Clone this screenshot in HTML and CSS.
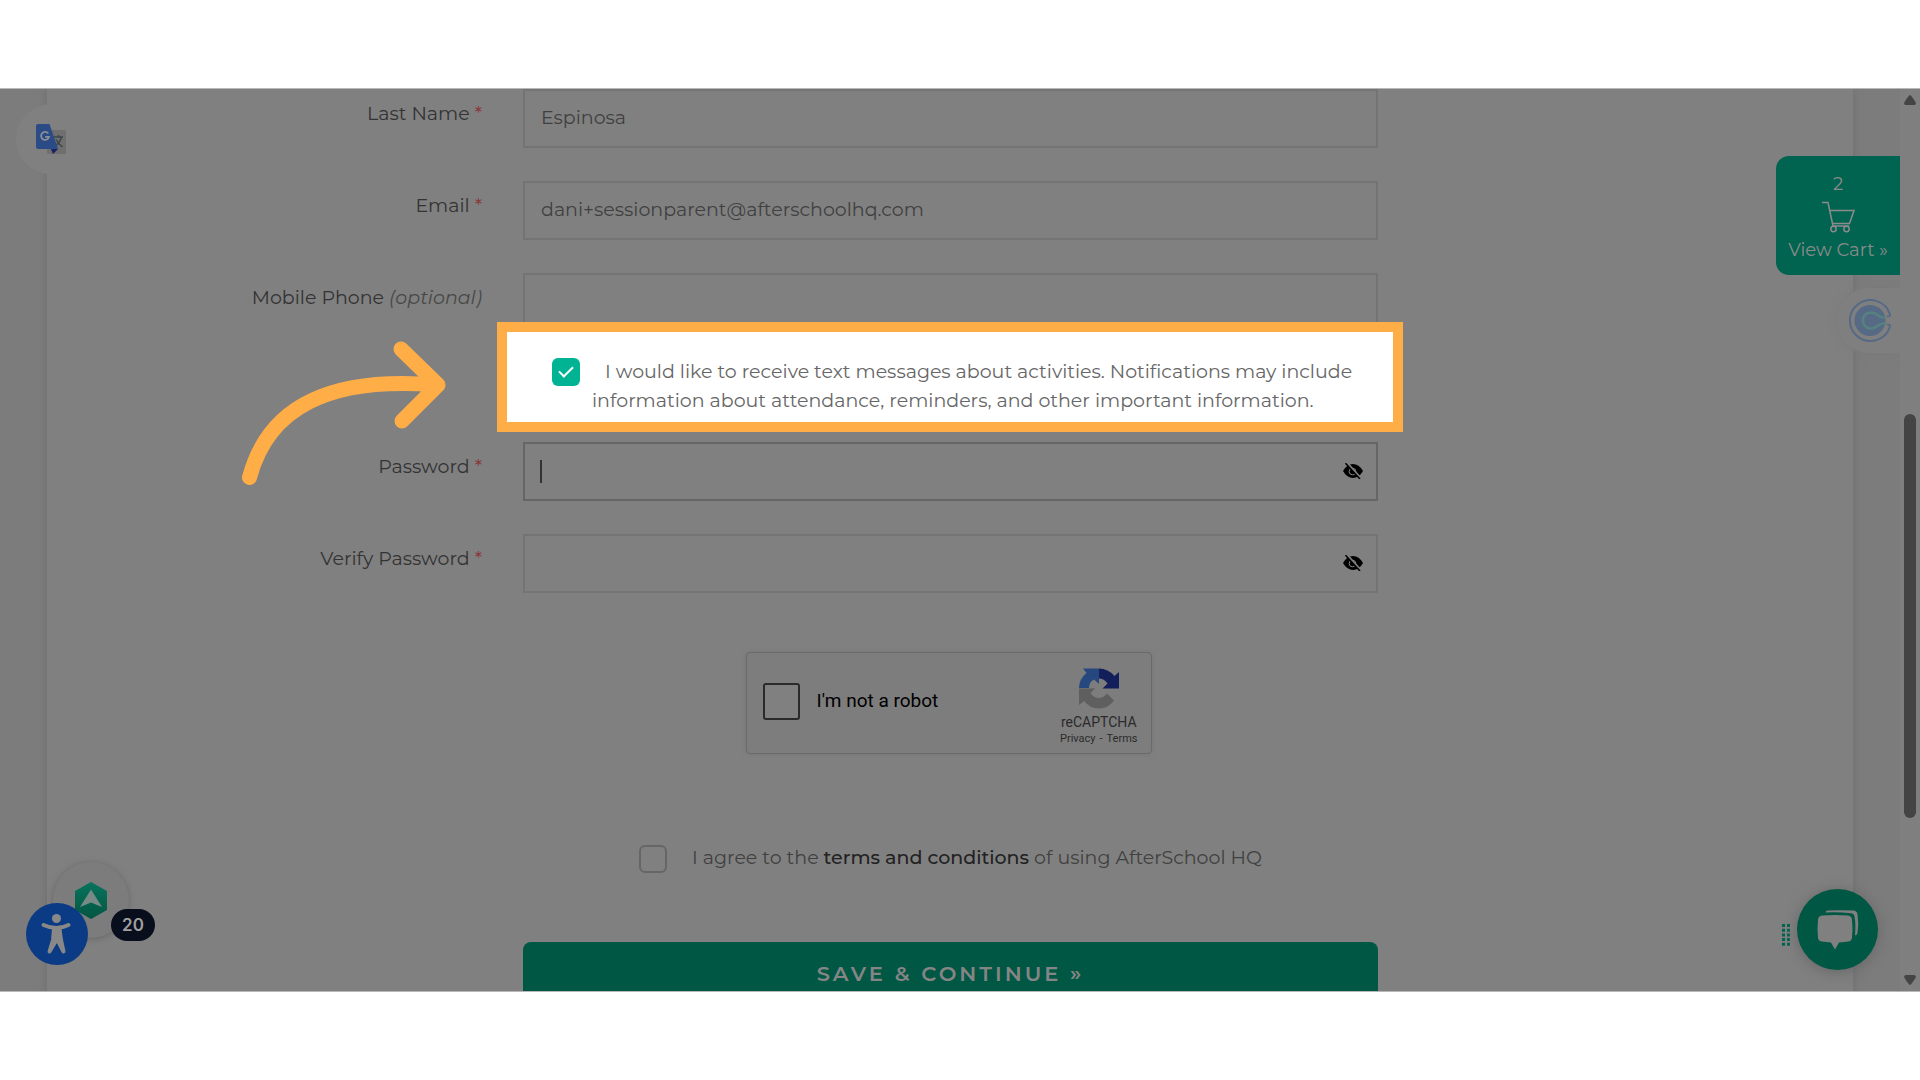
FILE: index.html
```html
<!DOCTYPE html>
<html lang="en">
<head>
<meta charset="utf-8">
<title>Create account</title>
<link rel="stylesheet" href="styles.css">
</head>
<body>
<main class="stage">
  <div class="page">
    <form class="panel">
      <div class="row">
        <label for="last">Last Name <span class="req">*</span></label>
        <div class="field"><input class="text-input" id="last" type="text" value="Espinosa"></div>
      </div>
      <div class="row">
        <label for="email">Email <span class="req">*</span></label>
        <div class="field"><input class="text-input" id="email" type="email" value="dani+sessionparent@afterschoolhq.com"></div>
      </div>
      <div class="row">
        <label for="phone">Mobile Phone <em>(optional)</em></label>
        <div class="field"><input class="text-input" id="phone" type="tel"></div>
      </div>
      <div class="row consent-row">
        <div class="consent">
          <input class="tick" type="checkbox" id="sms" checked>
          <label for="sms">I would like to receive text messages about activities. Notifications may include<br>information about attendance, reminders, and other important information.</label>
        </div>
      </div>
      <div class="row">
        <label for="pass">Password <span class="req">*</span></label>
        <div class="field">
          <input class="text-input active" id="pass" type="password">
          <span class="caret"></span>
          <button class="eye" type="button" aria-label="Show password"><svg viewBox="0 0 20 16"><path d="M0 8Q4 1 10 1T20 8Q16 15 10 15T0 8Z"/><circle cx="9.500" cy="8.500" r="3.300" fill="none" stroke="#808080" stroke-width="1"/><path d="M4 0 18 15.500" stroke="#808080" stroke-width="2.400"/><path d="M2.500 .2 17 16" stroke="#000" stroke-width="1.500"/></svg></button>
        </div>
      </div>
      <div class="row">
        <label for="verify">Verify Password <span class="req">*</span></label>
        <div class="field">
          <input class="text-input" id="verify" type="password">
          <button class="eye" type="button" aria-label="Show password"><svg viewBox="0 0 20 16"><path d="M0 8Q4 1 10 1T20 8Q16 15 10 15T0 8Z"/><circle cx="9.500" cy="8.500" r="3.300" fill="none" stroke="#808080" stroke-width="1"/><path d="M4 0 18 15.500" stroke="#808080" stroke-width="2.400"/><path d="M2.500 .2 17 16" stroke="#000" stroke-width="1.500"/></svg></button>
        </div>
      </div>
      <div class="row wide captcha-row">
        <div class="captcha">
          <input class="robot" type="checkbox" id="robot">
          <label for="robot">I'm not a robot</label>
          <div class="brand">
            <svg viewBox="0 0 40 41" width="40" height="41">
              <path fill="#27477f" d="M0 20A20 20 0 0 1 7.500 5L4 .5H20V16L15 11.500Q10 14 10 20Z"/>
              <path fill="#121f5a" d="M20 .5Q29 .5 35.500 8L40 4V20.500H23.500L28.500 15.500Q25 10.500 20 10.500Z"/>
              <path fill="#5f5f5f" d="M0 20.500H16L11.500 25Q14.500 30 20 30 24 30 28 25.500L35 32.500Q29 40.500 20 40.500 11 40.500 5 33L0 37Z"/>
            </svg>
            <span class="brand-name">reCAPTCHA</span>
            <span class="brand-links"><a href="#">Privacy</a><span>-</span><a href="#">Terms</a></span>
          </div>
        </div>
      </div>
      <div class="row wide agree-row">
        <div class="agree">
          <input class="tick" type="checkbox" id="agree">
          <label for="agree">I agree to the <a href="#">terms and conditions</a> of using AfterSchool HQ</label>
        </div>
      </div>
      <div class="row wide save-row">
        <button class="save" type="submit">SAVE &amp; CONTINUE »</button>
      </div>
    </form>

    <button class="translate" type="button" aria-label="Translate">
      <svg viewBox="0 0 30 31" width="30" height="31">
        <rect x="11" y="6" width="19" height="24" rx="1.500" fill="#6f6f6f"/>
        <path d="M18 13H27M22.500 11V13M25.500 13Q24 19 18.500 22.500M20 15.500Q22 19.500 26.500 23" fill="none" stroke="#3b474b" stroke-width="1.500"/>
        <path d="M15 25H22L17 30Z" fill="#1a2260"/>
        <path d="M2 0H13.500L22 25H2Q0 25 0 23V2Q0 0 2 0Z" fill="#2b4b86"/>
        <path d="M12.300 9.500A4 4 0 1 0 13 12.800H9.200" fill="none" stroke="#8c9097" stroke-width="1.700"/>
      </svg>
    </button>

    <a class="cart" href="#">
      <span>2</span>
      <svg viewBox="0 0 33 32" width="33" height="32" fill="none" stroke="#8b8b8b" stroke-width="1.500">
        <path d="M0 1.500H6L11 25H27M8 9.500H32L27.500 22.500H11"/><circle cx="11.500" cy="28" r="2.700"/><circle cx="24.500" cy="28" r="2.700"/>
      </svg>
      <span>View Cart »</span>
    </a>

    <a class="calendly" href="#" aria-label="Schedule">
      <svg viewBox="0 0 43 43" width="43" height="43" fill="none">
        <circle cx="21" cy="21.500" r="15.500" fill="#566a86"/>
        <path d="M37 17 44 15V28L37 26Z" fill="#7f7f7f"/>
        <path d="M41 15.500A20.500 20.500 0 1 0 41 27.500Q42 25.500 38 25.500M41 15.500Q42 17.500 38 17.500" stroke="#566a86" stroke-width="2"/>
        <path d="M37 18.500H34Q31 18.500 28.500 16 26 13.500 22 13.500 14 14 14 21.500T22 29.500Q26 29.500 28.500 27 31 24.500 34 24.500H37" stroke="#56817f" stroke-width="2.600"/>
      </svg>
    </a>

    <div class="assistant">
      <svg viewBox="0 0 32 37" width="32" height="37">
        <defs><linearGradient id="hexa" x2="0" y2="1"><stop stop-color="#08735c"/><stop offset="1" stop-color="#035642"/></linearGradient></defs>
        <path d="M16 1 31 9.500V27.500L16 36 1 27.500V9.500Z" fill="url(#hexa)" stroke="url(#hexa)" stroke-width="2" stroke-linejoin="round"/>
        <path d="M16 7.500 27 25 16 20.500 5 25Z" fill="#788a85"/>
      </svg>
    </div>
    <button class="access" type="button" aria-label="Accessibility">
      <svg viewBox="0 0 62 62" width="62" height="62" fill="none" stroke="#888" stroke-linecap="round" stroke-linejoin="round">
        <circle cx="30.500" cy="15.500" r="4.500" fill="#888" stroke="none"/>
        <path d="M17.500 22Q30.500 28 42.500 22" stroke-width="4"/>
        <path d="M28 26H33.500L35 37 37.500 48.500 31 36 23.500 48.500 27 37Z" stroke-width="4" fill="#888"/>
        <path d="M27 51 31 41 34.500 51Z" fill="#0a3b84" stroke="none"/>
      </svg>
    </button>
    <span class="count">20</span>

    <svg class="grip" viewBox="0 0 8 22" width="8" height="22"><path d="M1.500 0V22M6.500 0V22" stroke="#006450" stroke-width="3" stroke-dasharray="3 1.700"/></svg>
    <button class="chat" type="button" aria-label="Open chat">
      <svg viewBox="0 0 42 40" width="42" height="40" fill="#808080">
        <path d="M5 5.500Q18 4.500 31 5.500 34.500 6 35 9.500 36 19 35 28 34.500 31 31.500 31.500L22 32.500 18 39.500 14 32.500 4.500 31.500Q1.500 31 1 28 0 19 1 9.500 1.500 6 5 5.500Z"/>
        <path d="M8.500 2.500Q8.500 .8 11 .6 24 0 37 .6 40 1 40.500 4.500 42 14 40.500 23 40 25 38 25.500 39 14 37.500 6.500 37 3.500 34 3.200 22 2 8.500 2.500Z"/>
      </svg>
    </button>

    <svg class="arrow" viewBox="0 0 206 146" width="206" height="146" fill="none" stroke="#ffad47" stroke-width="15" stroke-linecap="round" stroke-linejoin="round">
      <path d="M9.500 136.500C28 67 88 35 196 44M161 8 198 44 162 80"/>
    </svg>
  </div>
  <div class="scroll">
    <svg viewBox="0 0 12 10" width="12" height="10"><path d="M6 0Q7 0 11.500 7 12.500 10 10 10H2Q-.5 10 .5 7 5 0 6 0Z"/></svg>
    <div class="track"><div class="thumb"></div></div>
    <svg viewBox="0 0 12 10" width="12" height="10"><path d="M6 10Q7 10 11.500 3 12.500 0 10 0H2Q-.5 0 .5 3 5 10 6 10Z"/></svg>
  </div>
</main>
</body>
</html>
```
FILE: styles.css
```css
* { box-sizing: border-box; }

body {
  margin: 0;
  height: 100vh;
  padding: 88px 0;
  background: #fff;
  color: #333;
  font: 19px/28px Montserrat, Inter, sans-serif;
}

a { color: inherit; text-decoration: none; }
button { padding: 0; border: 0; font: inherit; color: inherit; }
input { margin: 0; font: inherit; }
svg { display: block; }

.stage {
  display: flex;
  height: 100%;
  overflow: hidden;
  background: #7c7c7c;
  border: solid #b8b8b8;
  border-width: 1px 0;
}

.page { position: relative; flex: 1; overflow: hidden; }

.panel {
  min-height: 100%;
  margin: 0 47px;
  background: #808080;
  box-shadow: 0 0 8px #6e6e6e;
}

.row {
  display: grid;
  grid-template-columns: 436fr 855fr 435fr;
  column-gap: 40px;
  margin-bottom: 33px;
}
.row > label { padding: 11px 1px 0 0; text-align: right; }
.row em { color: #484848; }
.req { color: #833; }

.field { position: relative; display: flex; }
.text-input {
  width: 100%;
  height: 59px;
  padding: 0 16px 2px;
  border: 2px solid #747474;
  background: none;
  color: #404040;
  outline: none;
}
.text-input.active { border-color: #666; }
.caret {
  position: absolute;
  left: 17px;
  top: 18px;
  width: 2px;
  height: 23px;
  background: #333;
}
.eye {
  position: absolute;
  right: 15px;
  top: 21px;
  width: 20px;
  height: 16px;
  background: none;
}

.consent-row { margin: -43px 0 10px; }
.consent {
  position: relative;
  grid-column: 2;
  display: flex;
  gap: 12px;
  margin: 0 -25px 0 -26px;
  padding: 25px 20px 15px 45px;
  height: 110px;
  border: 10px solid #ffad47;
  background: #fff;
  color: #666;
}
.consent label { line-height: 29px; text-indent: 13px; white-space: nowrap; }

.tick {
  flex: none;
  display: grid;
  place-items: center;
  width: 28px;
  height: 28px;
  border: 2px solid #666;
  border-radius: 6px;
  appearance: none;
}
.tick:checked { margin-top: 1px; border: 0; background: #00b393; }
.tick:checked::before {
  content: "";
  width: 6px;
  height: 12px;
  margin-bottom: 4px;
  border: solid #fff;
  border-width: 0 2px 2px 0;
  transform: rotate(45deg);
}

.wide > * { grid-column: 2; justify-self: center; }

.captcha-row { margin: 59px 0 90px; }
.captcha {
  display: flex;
  align-items: center;
  width: 406px;
  height: 102px;
  margin-right: 4px;
  padding: 0 13px 4px 16px;
  border: 1px solid #6a6a6a;
  border-radius: 4px;
  background: #7d7d7d;
  box-shadow: 0 0 5px #747474;
  color: #000;
  font-family: Roboto, sans-serif;
}
.robot {
  width: 37px;
  height: 37px;
  margin-right: 17px;
  border: 2px solid #2a2a2a;
  border-radius: 3px;
  background: #808080;
  appearance: none;
}
.brand {
  display: flex;
  flex-direction: column;
  align-items: center;
  margin-left: auto;
  padding-top: 12px;
  color: #2b2b2b;
}
.brand-name { padding-top: 3px; font-size: 14px; line-height: 20px; }
.brand-links { display: flex; gap: 4px; font-size: 11px; line-height: 14px; }

.agree-row { margin: 0 0 69px; }
.agree { display: flex; gap: 25px; color: #404040; }
.agree .tick { margin-top: 1px; }
.agree a { color: #222; font-weight: 500; }

.save-row { margin: 0; }
.save {
  width: 100%;
  height: 64px;
  border-radius: 8px;
  background: #005744;
  color: #858585;
  font-size: 21px;
  font-weight: 600;
  letter-spacing: 3px;
}

.translate {
  position: absolute;
  left: 16px;
  top: 15px;
  display: grid;
  place-items: center;
  width: 70px;
  height: 70px;
  border-radius: 50%;
  background: #808080;
}

.cart {
  position: absolute;
  right: 0;
  top: 67px;
  display: flex;
  flex-direction: column;
  align-items: center;
  gap: 3px;
  width: 124px;
  height: 119px;
  padding-top: 14px;
  border-radius: 13px 0 0 13px;
  background: #006450;
  color: #8b8b8b;
  font-size: 18px;
}

.calendly {
  position: absolute;
  right: 0;
  top: 199px;
  width: 63px;
  height: 65px;
  padding: 11px 0 0 12px;
  border-radius: 32px 0 0 32px;
  background: #7f7f7f;
  box-shadow: 0 0 8px #7a7a7a;
}

.assistant {
  position: absolute;
  left: 53px;
  bottom: 53px;
  display: grid;
  place-items: center;
  width: 76px;
  height: 76px;
  border-radius: 50%;
  background: #7c7c7c;
  box-shadow: 0 1px 6px #666;
}
.access {
  position: absolute;
  left: 26px;
  bottom: 26px;
  width: 62px;
  height: 62px;
  border-radius: 50%;
  background: #0a3b84;
}
.count {
  position: absolute;
  left: 111px;
  bottom: 50px;
  width: 44px;
  border-radius: 16px;
  background: #080e1b;
  color: #a0a0a0;
  font: 600 17px/32px Inter, sans-serif;
  text-align: center;
}

.chat {
  position: absolute;
  right: 22px;
  bottom: 21px;
  display: grid;
  place-items: center;
  width: 81px;
  height: 81px;
  border-radius: 50%;
  background: #005744;
  box-shadow: 0 2px 14px #666;
}
.grip { position: absolute; right: 110px; bottom: 45px; }

.arrow { position: absolute; left: 240px; top: 252px; }

.scroll {
  display: flex;
  flex-direction: column;
  align-items: center;
  width: 20px;
  padding: 6px 0;
  background: #7f7f7f;
  fill: #444;
}
.track { flex: 1; padding-top: 309px; }
.thumb { width: 12px; height: 404px; border-radius: 6px; background: #444; }
```
